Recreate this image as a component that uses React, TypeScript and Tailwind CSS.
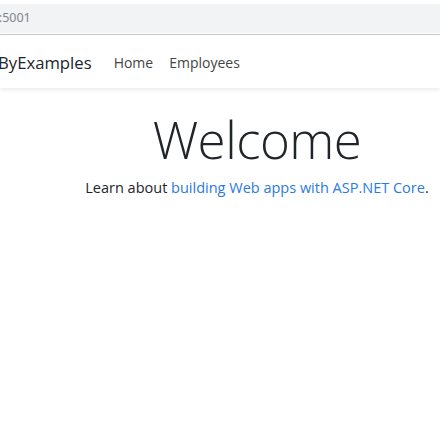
export default function App() {
  return (
    <div className="w-[440px] h-[440px] overflow-hidden bg-white relative" style={{ fontFamily: '"Open Sans", "Noto Sans", sans-serif' }}>
      {/* browser address bar */}
      <div className="h-[35px] bg-white border-b border-[#c8c8c8] flex flex-col">
        <div className="h-[4px] bg-white"></div>
        <div className="h-[29px] bg-[#f1f3f4] flex items-center overflow-hidden">
          <div className="ml-[-54px] text-[12.5px] text-[#80868b] whitespace-nowrap" style={{ fontFamily: '"Noto Sans", sans-serif' }}>localhost:5001</div>
        </div>
      </div>
      {/* navbar */}
      <div className="h-[53px] bg-white shadow-[0_2px_4px_rgba(0,0,0,0.08)] flex items-center relative z-10">
        <div className="ml-[-2px] mt-[2px] flex items-center whitespace-nowrap">
          <span className="text-[16.7px] text-[#212529] mr-[22px]">ByExamples</span>
          <span className="text-[14px] text-[#444] mr-[16px]">Home</span>
          <span className="text-[14px] text-[#444]">Employees</span>
        </div>
      </div>
      {/* main */}
      <div className="flex flex-col items-center w-[514px] pt-[26px]">
        <div className="text-[51px] font-light text-[#212529] leading-none tracking-[-0.5px]">Welcome</div>
        <div className="mt-[12px] text-[14.5px] text-[#212529] whitespace-nowrap">
          Learn about <span className="text-[#2a7ae2]">building Web apps with ASP.NET Core</span>.
        </div>
      </div>
    </div>
  );
}
